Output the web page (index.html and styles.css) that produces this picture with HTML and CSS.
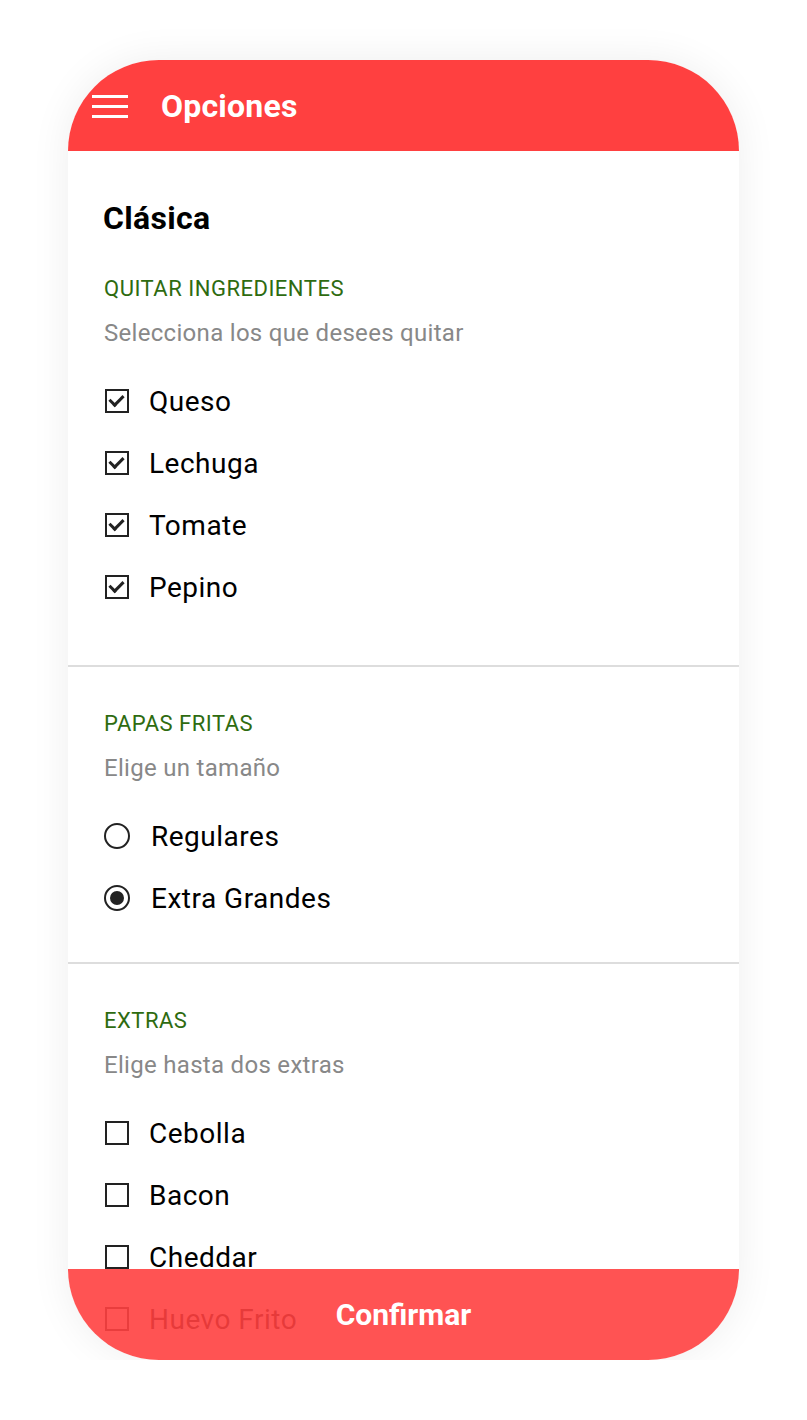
FILE: index.html
```html
<!DOCTYPE html>
<html>
<head>
    <title>Opciones</title>
    <link rel="stylesheet" href="styles.css">
</head>
<body>
    <div class="phone">
        <div class="top-bar">
            <div class="menu-icon">
                <span></span>
                <span></span>
                <span></span>
            </div>
            <h1 class="top-title">Opciones</h1>
        </div>

        <div class="content">
            <div class="section section-first">
                <h2 class="product-name">Clásica</h2>
                <div class="group-label">QUITAR INGREDIENTES</div>
                <div class="group-hint">Selecciona los que desees quitar</div>
                <ul class="option-list">
                    <li class="option"><span class="check checked"></span>Queso</li>
                    <li class="option"><span class="check checked"></span>Lechuga</li>
                    <li class="option"><span class="check checked"></span>Tomate</li>
                    <li class="option"><span class="check checked"></span>Pepino</li>
                </ul>
            </div>

            <div class="section section-radio">
                <div class="group-label">PAPAS FRITAS</div>
                <div class="group-hint">Elige un tamaño</div>
                <ul class="option-list">
                    <li class="option radio-option"><span class="radio"></span>Regulares</li>
                    <li class="option radio-option"><span class="radio selected"></span>Extra Grandes</li>
                </ul>
            </div>

            <div class="section">
                <div class="group-label">EXTRAS</div>
                <div class="group-hint">Elige hasta dos extras</div>
                <ul class="option-list">
                    <li class="option"><span class="check"></span>Cebolla</li>
                    <li class="option"><span class="check"></span>Bacon</li>
                    <li class="option"><span class="check"></span>Cheddar</li>
                    <li class="option"><span class="check"></span>Huevo Frito</li>
                </ul>
            </div>
        </div>

        <button class="confirm-bar">Confirmar</button>
    </div>
</body>
</html>
```

FILE: styles.css
```css
body {
    margin: 0;
    background-color: #fff;
    font-family: Roboto, "Liberation Sans", sans-serif;
}

.phone {
    position: relative;
    width: 671px;
    height: 1300px;
    margin: 60px 0 0 68px;
    border-radius: 91px;
    overflow: hidden;
    background-color: #fff;
    box-shadow: 0 0 40px rgba(0, 0, 0, 0.07);
}

.top-bar {
    height: 91px;
    background-color: #ff4040;
    display: flex;
    align-items: center;
    padding-left: 24px;
}

.menu-icon {
    width: 36px;
    display: flex;
    flex-direction: column;
    gap: 7px;
    margin-top: 1px;
}

.menu-icon span {
    display: block;
    height: 3px;
    background-color: #fff;
}

.top-title {
    margin: 0 0 0 33px;
    color: #fff;
    font-size: 32px;
    font-weight: bold;
    letter-spacing: 0.2px;
}

.content {
    padding-left: 35px;
}

.section {
    padding: 44px 0 33px 35px;
    border-top: 2px solid #ddd;
    margin-left: -35px;
}

.section-first {
    border-top: none;
    padding-top: 50px;
    padding-bottom: 47px;
}

.product-name {
    margin: 0 0 41px;
    font-size: 32px;
    line-height: 34px;
    font-weight: bold;
    color: #000;
    letter-spacing: 0.3px;
}

.group-label {
    margin-left: 1px;
    font-size: 22px;
    line-height: 25px;
    color: #2e6b10;
    letter-spacing: 0.5px;
}

.group-hint {
    margin: 20px 0 0 1px;
    font-size: 24px;
    line-height: 25px;
    color: #888;
    letter-spacing: 0.3px;
}

.option-list {
    list-style-type: none;
    margin: 24px 0 0;
    padding: 0;
}

.option {
    height: 62px;
    display: flex;
    align-items: center;
    font-size: 28px;
    color: #000;
    letter-spacing: 0.5px;
}

.check {
    box-sizing: border-box;
    width: 24px;
    height: 24px;
    margin: 0 20px 0 2px;
    border: 2.5px solid #222;
    position: relative;
}

.check.checked::after {
    content: "";
    position: absolute;
    left: 5px;
    top: 1px;
    width: 6px;
    height: 11px;
    border-right: 3px solid #222;
    border-bottom: 3px solid #222;
    transform: rotate(45deg);
}

.radio {
    box-sizing: border-box;
    width: 26px;
    height: 26px;
    margin: 0 21px 0 1px;
    border: 2px solid #222;
    border-radius: 50%;
    display: flex;
    align-items: center;
    justify-content: center;
}

.radio.selected::after {
    content: "";
    width: 14px;
    height: 14px;
    border-radius: 50%;
    background-color: #222;
}

.confirm-bar {
    position: absolute;
    left: 0;
    right: 0;
    bottom: 0;
    height: 91px;
    border: none;
    background-color: rgba(255, 64, 64, 0.9);
    color: #fff;
    font-family: Roboto, "Liberation Sans", sans-serif;
    font-size: 30px;
    font-weight: bold;
    cursor: pointer;
}
```
